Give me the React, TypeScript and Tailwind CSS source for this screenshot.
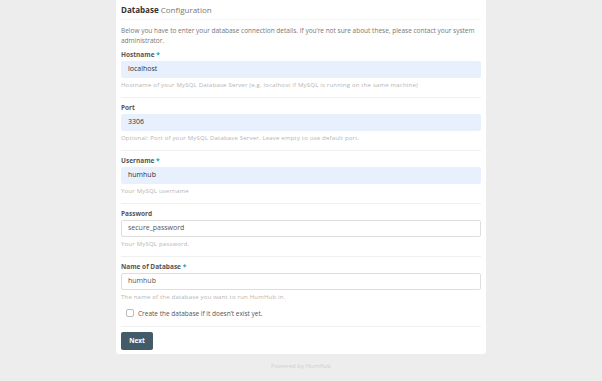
import React from 'react';

interface FieldProps {
  label: string;
  required?: boolean;
  value: string;
  hint: string;
  filled?: boolean;
}

const Field: React.FC<FieldProps> = ({ label, required, value, hint, filled = true }) => (
  <div className="flex flex-col">
    <label className="text-[6.5px] leading-[9px] font-bold text-[#555]">
      {label}
      {required && <span className="text-[#21a1b3]"> *</span>}
    </label>
    <div
      className={
        filled
          ? 'mt-[2.5px] h-[17px] rounded-[2px] border border-[#e8f0fe] bg-[#e8f0fe] px-[6px] flex items-center text-[7px] text-[#333]'
          : 'mt-[2.5px] h-[17px] rounded-[2px] border border-[#dedede] bg-white px-[6px] flex items-center text-[7px] text-[#555]'
      }
    >
      {value}
    </div>
    <p className="mt-[3px] text-[6px] tracking-[0.2px] leading-[8px] text-[#b5b5b5]">{hint}</p>
  </div>
);

const Divider: React.FC<{ className?: string }> = ({ className }) => (
  <div className={`h-px bg-[#f0f0f0] ${className ?? ''}`} />
);

export default function App() {
  return (
    <div
      className="min-h-[381px] w-full bg-[#ededed] flex flex-col items-center"
      style={{ fontFamily: '"Open Sans", "Liberation Sans", sans-serif' }}
    >
      <div className="w-[370px] bg-white rounded-b-[3px] px-[5px] pb-[4px]">
        <div className="h-[20px] flex items-center border-b border-[#f5f5f5] text-[8px] text-[#777]">
          <span className="font-bold text-[#333]">Database</span>
          <span className="ml-[2px]">Configuration</span>
        </div>

        <p className="mt-[6px] text-[6.5px] leading-[9.5px] text-[#777]">
          Below you have to enter your database connection details. If you’re not sure about these, please contact your system
          administrator.
        </p>

        <div className="mt-[4.5px]">
          <Field
            label="Hostname"
            required
            value="localhost"
            hint="Hostname of your MySQL Database Server (e.g. localhost if MySQL is running on the same machine)"
          />
        </div>
        <Divider className="mt-[8px] mb-[4.5px]" />
        <Field
          label="Port"
          value="3306"
          hint="Optional: Port of your MySQL Database Server. Leave empty to use default port."
        />
        <Divider className="mt-[8px] mb-[4.5px]" />
        <Field label="Username" required value="humhub" hint="Your MySQL username" />
        <Divider className="mt-[8px] mb-[4.5px]" />
        <Field label="Password" value="secure_password" hint="Your MySQL password." filled={false} />
        <Divider className="mt-[8px] mb-[4.5px]" />
        <Field
          label="Name of Database"
          required
          value="humhub"
          hint="The name of the database you want to run HumHub in."
          filled={false}
        />

        <div className="mt-[8px] flex items-center pl-[5px] h-[8px]">
          <span className="w-[8px] h-[8px] rounded-[2px] border border-[#bbb] bg-white" />
          <span className="ml-[4px] text-[6.5px] leading-[9px] text-[#555]">
            Create the database if it doesn’t exist yet.
          </span>
        </div>

        <Divider className="mt-[9px] mb-[5px]" />

        <button className="h-[18px] w-[32px] rounded-[2px] bg-[#435b69] text-white text-[6.5px] font-bold flex items-center justify-center">
          Next
        </button>
      </div>

      <div className="mt-[8px] text-[6px] leading-[8px] text-[#cfcfcf]">Powered by HumHub</div>
    </div>
  );
}
